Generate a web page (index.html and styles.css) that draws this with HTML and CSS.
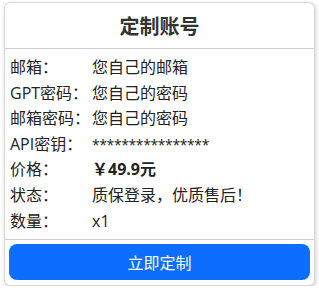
FILE: index.html
```html
<!DOCTYPE html>
<html lang="zh-CN">
<head>
    <meta charset="UTF-8">
    <meta name="viewport" content="width=device-width, initial-scale=1.0">
    <title>定制账号</title>
    <link rel="stylesheet" href="styles.css">
</head>
<body>
    <div class="card">
        <div class="card-header">
            <h2>定制账号</h2>
        </div>
        <div class="card-body">
            <div class="row"><span class="label">邮箱：</span><span class="value">您自己的邮箱</span></div>
            <div class="row"><span class="label">GPT密码：</span><span class="value">您自己的密码</span></div>
            <div class="row"><span class="label">邮箱密码：</span><span class="value">您自己的密码</span></div>
            <div class="row"><span class="label">API密钥：</span><span class="value secret">****************</span></div>
            <div class="row"><span class="label">价格：</span><span class="value price">￥49.9元</span></div>
            <div class="row"><span class="label">状态：</span><span class="value">质保登录，优质售后！</span></div>
            <div class="row"><span class="label">数量：</span><span class="value">x1</span></div>
        </div>
        <div class="card-footer">
            <button class="buy-btn">立即定制</button>
        </div>
    </div>
</body>
</html>
```

FILE: styles.css
```css
* {
    box-sizing: border-box;
    margin: 0;
    padding: 0;
}

body {
    font-family: "Open Sans", "Noto Sans CJK SC", sans-serif;
    background: #fff;
    color: #222;
    padding: 2px 4px 0 4px;
}

.card {
    width: 311px;
    border: 1px solid #d6d6d6;
    border-radius: 6px;
    box-shadow: 1px 2px 4px rgba(0, 0, 0, 0.18);
    background: #fff;
}

.card-header {
    height: 46px;
    border-bottom: 1px solid #d0d0d0;
    display: flex;
    align-items: center;
    justify-content: center;
}

.card-header h2 {
    font-size: 20px;
    font-weight: bold;
    color: #333;
}

.card-body {
    padding: 6px 5px 5px 5px;
}

.row {
    display: flex;
    font-size: 16px;
    line-height: 25.6px;
    white-space: nowrap;
}

.label {
    width: 82px;
    flex-shrink: 0;
}

.secret {
    font-size: 14px;
    letter-spacing: -0.4px;
}

.price {
    font-weight: bold;
}

.card-footer {
    border-top: 1px solid #d0d0d0;
    padding: 4px 4px 5px 4px;
}

.buy-btn {
    display: block;
    width: 100%;
    height: 36px;
    border: none;
    border-radius: 8px;
    background: #0d6efd;
    color: #fff;
    font-family: inherit;
    font-size: 16px;
}
```
